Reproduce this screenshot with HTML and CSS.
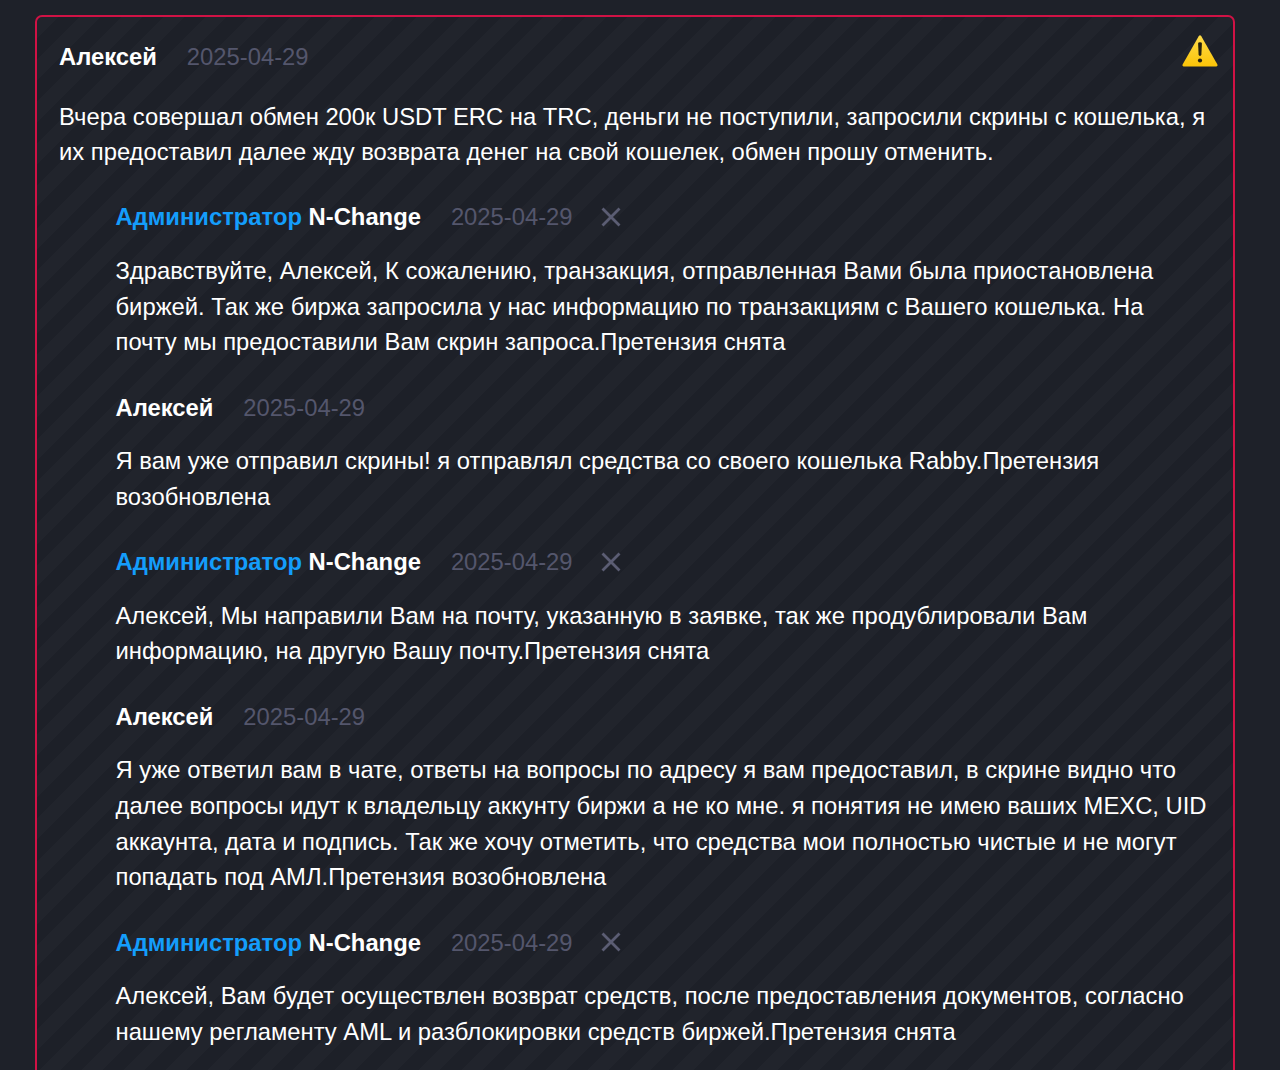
FILE: index.html
```
<!DOCTYPE html>
<html lang="ru">
<head>
    <meta charset="UTF-8">
    <meta name="viewport" content="width=device-width, initial-scale=1.0">
    <title>Отзывы</title>
    <link rel="stylesheet" href="styles.css">
</head>
<body>
    <article class="review">
        <div class="review-header">
            <span class="author">Алексей</span>
            <span class="date">2025-04-29</span>
            <svg class="warning" viewBox="0 0 36 32">
                <defs>
                    <linearGradient id="warningFill" x1="0" y1="0" x2="0" y2="1">
                        <stop offset="0" stop-color="#ffdc4a"/>
                        <stop offset="1" stop-color="#fbc408"/>
                    </linearGradient>
                </defs>
                <path d="M16.7 1.2Q18-.6 19.3 1.2L35.4 29.4Q36 31.2 34.4 31.4H1.6Q0 31.2.6 29.4Z" fill="url(#warningFill)"/>
                <path d="M16.1 8.6Q16.1 7.3 18 7.3T19.9 8.6L19.4 19.6Q19.3 20.9 18 20.9T16.6 19.6Z" fill="#25200f"/>
                <circle cx="18" cy="25.5" r="2.1" fill="#25200f"/>
            </svg>
        </div>
        <p class="review-text">Вчера совершал обмен 200к USDT ERC на TRC, деньги не поступили, запросили скрины с кошелька, я<br>их предоставил далее жду возврата денег на свой кошелек, обмен прошу отменить.</p>

        <div class="replies">
            <div class="reply">
                <div class="reply-header">
                    <span class="author"><span class="admin">Администратор</span> N-Change</span>
                    <span class="date">2025-04-29</span>
                    <svg class="close" viewBox="0 0 20 20"><path d="M1.5 1.5l17 17M18.5 1.5l-17 17"/></svg>
                </div>
                <p>Здравствуйте, Алексей, К сожалению, транзакция, отправленная Вами была приостановлена<br>биржей. Так же биржа запросила у нас информацию по транзакциям с Вашего кошелька. На<br>почту мы предоставили Вам скрин запроса.Претензия снята</p>
            </div>

            <div class="reply">
                <div class="reply-header">
                    <span class="author">Алексей</span>
                    <span class="date">2025-04-29</span>
                </div>
                <p>Я вам уже отправил скрины! я отправлял средства со своего кошелька Rabby.Претензия<br>возобновлена</p>
            </div>

            <div class="reply">
                <div class="reply-header">
                    <span class="author"><span class="admin">Администратор</span> N-Change</span>
                    <span class="date">2025-04-29</span>
                    <svg class="close" viewBox="0 0 20 20"><path d="M1.5 1.5l17 17M18.5 1.5l-17 17"/></svg>
                </div>
                <p>Алексей, Мы направили Вам на почту, указанную в заявке, так же продублировали Вам<br>информацию, на другую Вашу почту.Претензия снята</p>
            </div>

            <div class="reply">
                <div class="reply-header">
                    <span class="author">Алексей</span>
                    <span class="date">2025-04-29</span>
                </div>
                <p>Я уже ответил вам в чате, ответы на вопросы по адресу я вам предоставил, в скрине видно что<br>далее вопросы идут к владельцу аккунту биржи а не ко мне. я понятия не имею ваших MEXC, UID<br>аккаунта, дата и подпись. Так же хочу отметить, что средства мои полностью чистые и не могут<br>попадать под АМЛ.Претензия возобновлена</p>
            </div>

            <div class="reply">
                <div class="reply-header">
                    <span class="author"><span class="admin">Администратор</span> N-Change</span>
                    <span class="date">2025-04-29</span>
                    <svg class="close" viewBox="0 0 20 20"><path d="M1.5 1.5l17 17M18.5 1.5l-17 17"/></svg>
                </div>
                <p>Алексей, Вам будет осуществлен возврат средств, после предоставления документов, согласно<br>нашему регламенту AML и разблокировки средств биржей.Претензия снята</p>
            </div>
        </div>
    </article>
</body>
</html>
```
FILE: styles.css
```
* {
    box-sizing: border-box;
}
body {
    margin: 0;
    padding: 15px 45px 0 35px;
    height: 1070px;
    overflow: hidden;
    font-family: "Liberation Sans", Arial, sans-serif;
    font-size: 23.79px;
    line-height: 35.63px;
    background-color: #1e2129;
    color: #fff;
}
p {
    margin: 0;
    white-space: nowrap;
}
.review {
    position: relative;
    height: 1100px;
    padding: 22px 22px 0;
    border: 2px solid #d01245;
    border-radius: 7px;
    background: repeating-linear-gradient(135deg, #21242c 0, #21242c 14.92px, #1d2028 14.92px, #1d2028 29.84px);
}
.review-header,
.reply-header {
    display: flex;
    align-items: center;
    gap: 30px;
}
.review-header {
    margin-bottom: 24px;
}
.reply-header {
    margin-bottom: 18px;
}
.author {
    font-weight: bold;
}
.admin {
    color: #149dfb;
}
.date {
    color: #54566c;
}
.warning {
    position: absolute;
    top: 18px;
    right: 15px;
    width: 36px;
    height: 32px;
}
.close {
    width: 20px;
    height: 20px;
    margin-left: -1.5px;
    fill: none;
    stroke: #5b5d73;
    stroke-width: 2.8;
}
.replies {
    display: flex;
    flex-direction: column;
    gap: 29.7px;
    margin-top: 29.6px;
    padding-left: 56.5px;
}
```
